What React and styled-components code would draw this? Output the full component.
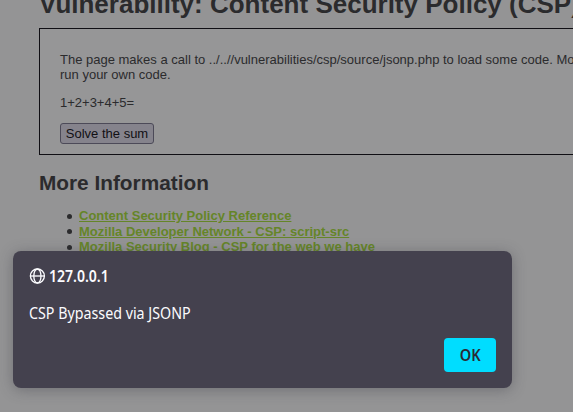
import React from "react";
import styled, { createGlobalStyle } from "styled-components";

const GlobalStyle = createGlobalStyle`
  * { box-sizing: border-box; }
  html, body { margin: 0; height: 100%; overflow: hidden; background: #949495; }
`;

const Page = styled.main`
  position: relative;
  width: 100vw;
  height: 100vh;
  overflow: hidden;
  padding-left: 39px;
  background: #949495;
  color: #2b2b2d;
  font: 13px/15px "Liberation Sans", Arial, sans-serif;
`;

const Title = styled.h1`
  margin: -11px 0 9px;
  font-size: 26px;
  line-height: 30px;
  white-space: nowrap;
`;

const CodeArea = styled.section`
  width: 680px;
  height: 127px;
  padding: 23px 20px 0;
  border: 1px solid #100f14;
  background: #969697;
`;

const Paragraph = styled.p`
  margin: 0 0 13px;
`;

const SolveButton = styled.button`
  display: block;
  width: 94px;
  height: 21px;
  padding: 0;
  border: 1px solid #4c4a58;
  border-radius: 3px;
  background: #85838c;
  color: #111014;
  font: 13px/17px "Liberation Sans", Arial, sans-serif;
`;

const Heading = styled.h2`
  margin: 16px 0 13px;
  font-size: 20.8px;
  line-height: 24px;
`;

const LinkList = styled.ul`
  margin: 0;
  padding-left: 28px;
  list-style: none;
  line-height: 15.6px;
`;

const LinkItem = styled.li`
  display: flex;
  align-items: center;
  gap: 7px;

  &::before {
    content: "";
    width: 5px;
    height: 5px;
    margin-top: 1px;
    border-radius: 50%;
    background: #2b2b2d;
  }
`;

const ReferenceLink = styled.a`
  color: #658528;
  font-weight: bold;
  text-decoration: underline;
`;

const Dialog = styled.div`
  position: absolute;
  left: 13px;
  top: 251px;
  width: 499px;
  height: 137px;
  padding: 16px;
  display: flex;
  flex-direction: column;
  border-radius: 8px;
  background: #44414e;
  box-shadow: 0 2px 14px rgba(58, 57, 68, 0.4);
  color: #fbfbfe;
  font: 15.5px/18px "Noto Sans", sans-serif;
`;

const Origin = styled.div`
  display: flex;
  align-items: center;
  gap: 3px;
  height: 18px;
  font-weight: 600;
`;

const NarrowText = styled.span`
  display: inline-block;
  transform: scaleX(${({ $scale }) => $scale});
  transform-origin: ${({ $origin }) => $origin || "left"};
`;

const Message = styled.div`
  margin-top: 19px;
  height: 18px;
`;

const OkButton = styled.button`
  align-self: flex-end;
  width: 52px;
  height: 34px;
  margin-top: 16px;
  padding: 0;
  border: 0;
  border-radius: 4px;
  background: #00ddff;
  color: #2b2a33;
  font: 600 15.5px/20px "Noto Sans", sans-serif;
`;

const Globe = styled.svg`
  margin-top: -1px;
`;

const GlobeIcon = () => (
  <Globe width="17" height="16" viewBox="0 0 17 16" fill="none" stroke="currentColor" strokeWidth="1.35">
    <circle cx="8.4" cy="8" r="7" />
    <ellipse cx="8.4" cy="8" rx="3.6" ry="7" />
    <path d="M1.4 8h14" />
  </Globe>
);

const links = [
  "Content Security Policy Reference",
  "Mozilla Developer Network - CSP: script-src",
  "Mozilla Security Blog - CSP for the web we have",
];

export default function App() {
  return (
    <>
      <GlobalStyle />
      <Page>
        <Title>Vulnerability: Content Security Policy (CSP)</Title>
        <CodeArea>
          <Paragraph>
            The page makes a call to ../..//vulnerabilities/csp/source/jsonp.php to load some code. Mo
            <br />
            run your own code.
          </Paragraph>
          <Paragraph>1+2+3+4+5=</Paragraph>
          <SolveButton>Solve the sum</SolveButton>
        </CodeArea>
        <Heading>More Information</Heading>
        <LinkList>
          {links.map((label) => (
            <LinkItem key={label}>
              <ReferenceLink href="#">{label}</ReferenceLink>
            </LinkItem>
          ))}
        </LinkList>
        <Dialog role="alertdialog">
          <Origin>
            <GlobeIcon />
            <NarrowText $scale={0.905}>127.0.0.1</NarrowText>
          </Origin>
          <Message>
            <NarrowText $scale={0.92}>CSP Bypassed via JSONP</NarrowText>
          </Message>
          <OkButton>
            <NarrowText $scale={0.94} $origin="center">OK</NarrowText>
          </OkButton>
        </Dialog>
      </Page>
    </>
  );
}
